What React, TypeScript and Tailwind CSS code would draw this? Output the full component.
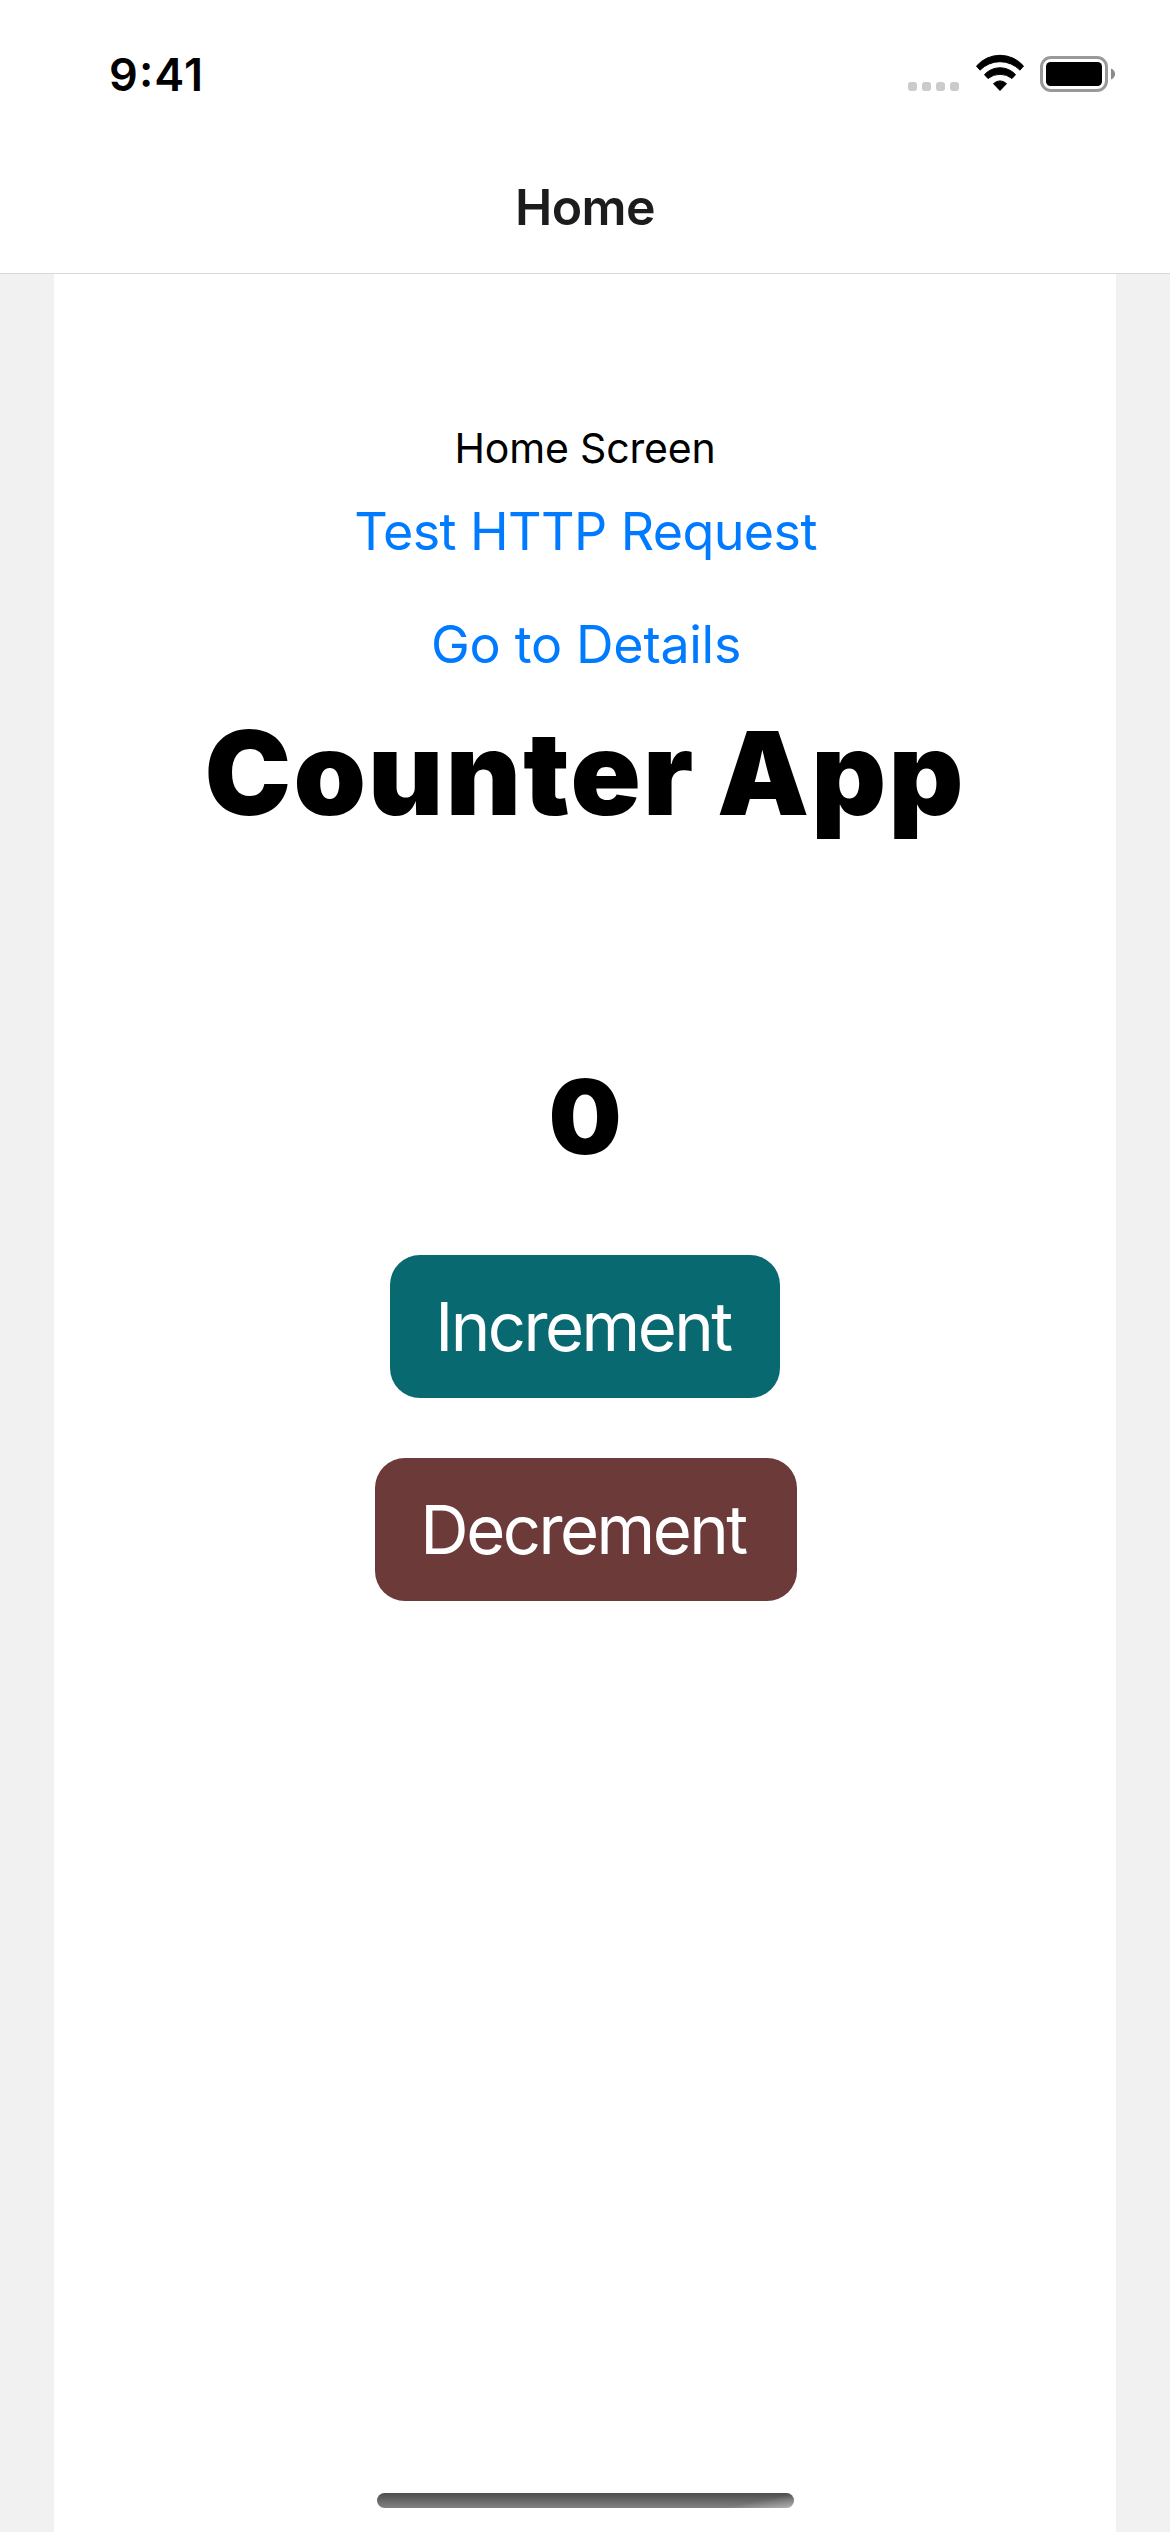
import { useState } from 'react';

function WifiIcon() {
  return (
    <svg className="mb-[3px] h-[38px] w-[50px]" viewBox="282 42 150 114" stroke="#000" strokeWidth="3" strokeLinejoin="round">
      <path d="M286.5 78 A93.5 93.5 0 0 1 427.500 78 L417 90.500 A83.500 83.500 0 0 0 297 90.500 Z" />
      <path d="M310.500 104 A62.500 62.500 0 0 1 403.500 104 L393 115.500 A57.500 57.500 0 0 0 321 115.500 Z" />
      <path d="M337.500 131 A27 27 0 0 1 376.500 131 L357 151.500 Z" />
    </svg>
  );
}

function BatteryIcon() {
  return (
    <svg className="mb-px h-[36px] w-[75px]" viewBox="0 0 75 36">
      <rect x="1.500" y="1.500" width="65" height="33" rx="9.500" fill="none" stroke="#999" strokeWidth="3" />
      <rect x="6" y="6" width="56" height="24" rx="4.500" fill="#000" />
      <path d="M71 12.500 C73.700 13.600 75 15.600 75 18 C75 20.400 73.700 22.400 71 23.500 Z" fill="#8a8a8a" />
    </svg>
  );
}

function StatusBar() {
  return (
    <div className="flex h-[141px] items-center pt-2 pr-[55px] pl-[109px] text-black">
      <span
        className="text-[45px] leading-[54px] font-semibold tracking-[1.1px]"
        style={{ fontFeatureSettings: '"calt" 1, "case" 1' }}
      >
        9:41
      </span>
      <div className="ml-auto flex items-center">
        <div className="mt-6 mr-4 flex gap-[5px]">
          <i className="size-[9px] rounded-[3px] bg-[#cbcbcb]" />
          <i className="size-[9px] rounded-[3px] bg-[#cbcbcb]" />
          <i className="size-[9px] rounded-[3px] bg-[#cbcbcb]" />
          <i className="size-[9px] rounded-[3px] bg-[#cbcbcb]" />
        </div>
        <WifiIcon />
        <div className="ml-[15px]">
          <BatteryIcon />
        </div>
      </div>
    </div>
  );
}

export default function App() {
  const [count, setCount] = useState(0);

  return (
    <div className="flex h-[2532px] w-[1170px] flex-col overflow-hidden bg-white font-['Inter',sans-serif]">
      <StatusBar />
      <header className="flex h-[133px] items-center justify-center border-b border-[#d8d8d8]">
        <h1 className="text-[50px] leading-[60px] font-semibold tracking-[-0.58px] text-[#1c1c1e]">Home</h1>
      </header>

      <div className="flex-1 bg-[#f1f1f1] px-[54px]">
        <main className="flex h-full flex-col items-center bg-white pt-[149px] text-black">
          <p className="text-[41px] leading-[50px] tracking-[-0.17px]">Home Screen</p>
          <button className="mt-0.5 h-[113px] pl-px text-[52px] tracking-[-0.6px] text-[#007aff]">Test HTTP Request</button>
          <button className="h-[113px] pl-0.5 text-[52px] tracking-[-0.28px] text-[#007aff]">Go to Details</button>
          <h2 className="mt-0.5 text-[116px] leading-[140px] font-black tracking-[2.2px] [word-spacing:-4px]">Counter App</h2>
          <p className="mt-[212px] text-[103px] leading-[124px] font-black">{count}</p>
          <button
            className="mt-[76px] h-[143px] w-[390px] rounded-[30px] bg-[#096970] pt-0.5 pr-1 text-[67px] tracking-[-2.54px] text-white"
            onClick={() => setCount(count + 1)}
          >
            Increment
          </button>
          <button
            className="mt-[60px] ml-0.5 h-[143px] w-[422px] rounded-[30px] bg-[#6d3a3a] pt-0.5 pr-1.5 text-[67px] tracking-[-2.53px] text-white"
            onClick={() => setCount(count - 1)}
          >
            Decrement
          </button>
          <div className="mt-auto mb-6 ml-px h-[15px] w-[417px] overflow-hidden rounded-full bg-linear-to-b from-[#4e4e4e] to-[#828282]">
            <div className="ml-auto h-full w-[70px] bg-linear-to-br from-transparent from-50% to-white/40" />
          </div>
        </main>
      </div>
    </div>
  );
}
